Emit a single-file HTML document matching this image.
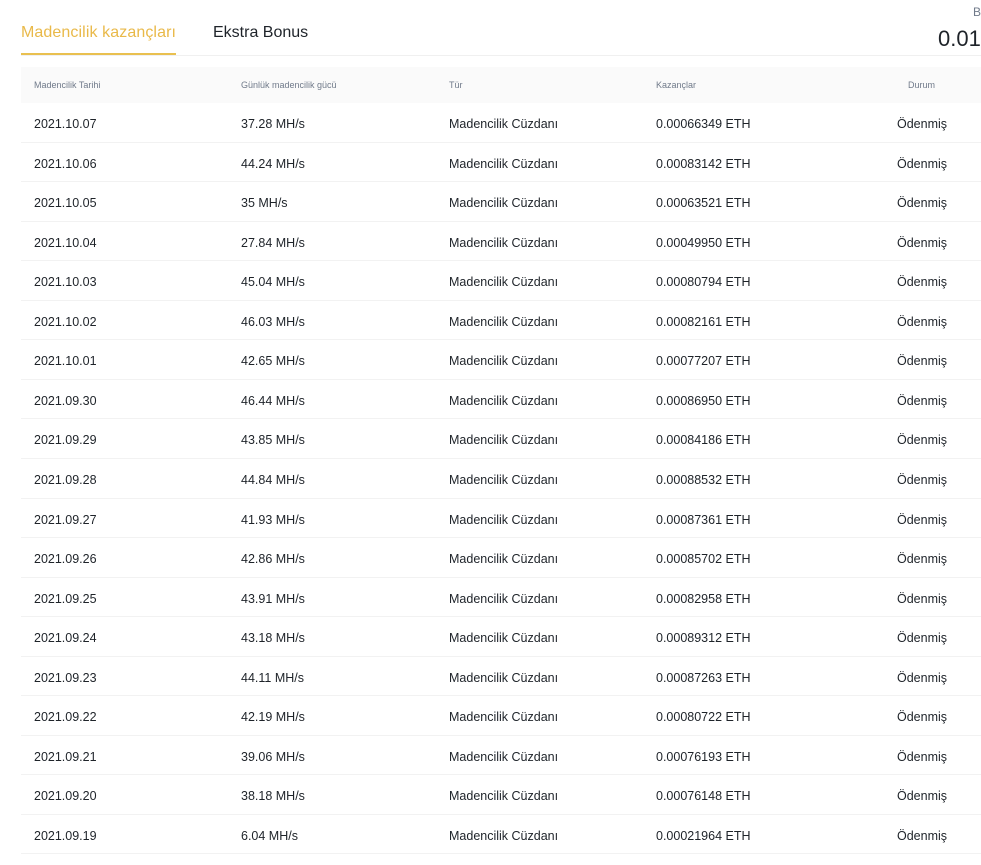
<!DOCTYPE html>
<html><head><meta charset="utf-8"><style>
*{margin:0;padding:0;box-sizing:border-box}
body{width:981px;height:865px;overflow:hidden;background:#fff;font-family:"Liberation Sans",sans-serif;color:#1e2329;position:relative}
.tab{position:absolute;top:24px;font-size:16px}
.t1{left:21px;color:#e9b949;letter-spacing:0.1px}
.t2{left:213px;color:#1e2329}
.ul{position:absolute;left:21px;top:53px;width:155px;height:2px;background:#e9c050}
.div{position:absolute;left:21px;top:55px;width:960px;height:1px;background:#f0f0f0}
.b{position:absolute;left:973px;top:5px;font-size:12px;color:#707a8a}
.big{position:absolute;left:938px;top:26px;font-size:22px;color:#1e2329}
.hd{position:absolute;left:21px;top:67px;width:960px;height:36px;background:#fafafa;font-size:9px;color:#707a8a}
.hd span,.row span{position:absolute}
.row{position:absolute;left:21px;width:960px;height:39.6px;border-bottom:1px solid #f2f2f2;font-size:12.5px}
.c1{left:13px}.c2{left:220px}.c3{left:428px}.c4{left:635px}.c5{left:876px}
.hd span{top:13px}
.row span{top:14px}
</style></head><body>
<div class="tab t1">Madencilik kazançları</div>
<div class="tab t2">Ekstra Bonus</div>
<div class="div"></div>
<div class="ul"></div>
<div class="b">B</div>
<div class="big">0.01</div>
<div class="hd"><span class="c1">Madencilik Tarihi</span><span class="c2">Günlük madencilik gücü</span><span class="c3">Tür</span><span class="c4">Kazançlar</span><span style="left:887px">Durum</span></div>
<div id="rows"></div>
<script>
var d=[["2021.10.07","37.28","0.00066349"],["2021.10.06","44.24","0.00083142"],["2021.10.05","35","0.00063521"],["2021.10.04","27.84","0.00049950"],["2021.10.03","45.04","0.00080794"],["2021.10.02","46.03","0.00082161"],["2021.10.01","42.65","0.00077207"],["2021.09.30","46.44","0.00086950"],["2021.09.29","43.85","0.00084186"],["2021.09.28","44.84","0.00088532"],["2021.09.27","41.93","0.00087361"],["2021.09.26","42.86","0.00085702"],["2021.09.25","43.91","0.00082958"],["2021.09.24","43.18","0.00089312"],["2021.09.23","44.11","0.00087263"],["2021.09.22","42.19","0.00080722"],["2021.09.21","39.06","0.00076193"],["2021.09.20","38.18","0.00076148"],["2021.09.19","6.04","0.00021964"]];
var h="";d.forEach(function(r,i){h+='<div class="row" style="top:'+(103+i*39.55)+'px"><span class="c1">'+r[0]+'</span><span class="c2">'+r[1]+' MH/s</span><span class="c3">Madencilik Cüzdanı</span><span class="c4">'+r[2]+' ETH</span><span class="c5">Ödenmiş</span></div>'});
document.getElementById("rows").innerHTML=h;
</script>
</body></html>
